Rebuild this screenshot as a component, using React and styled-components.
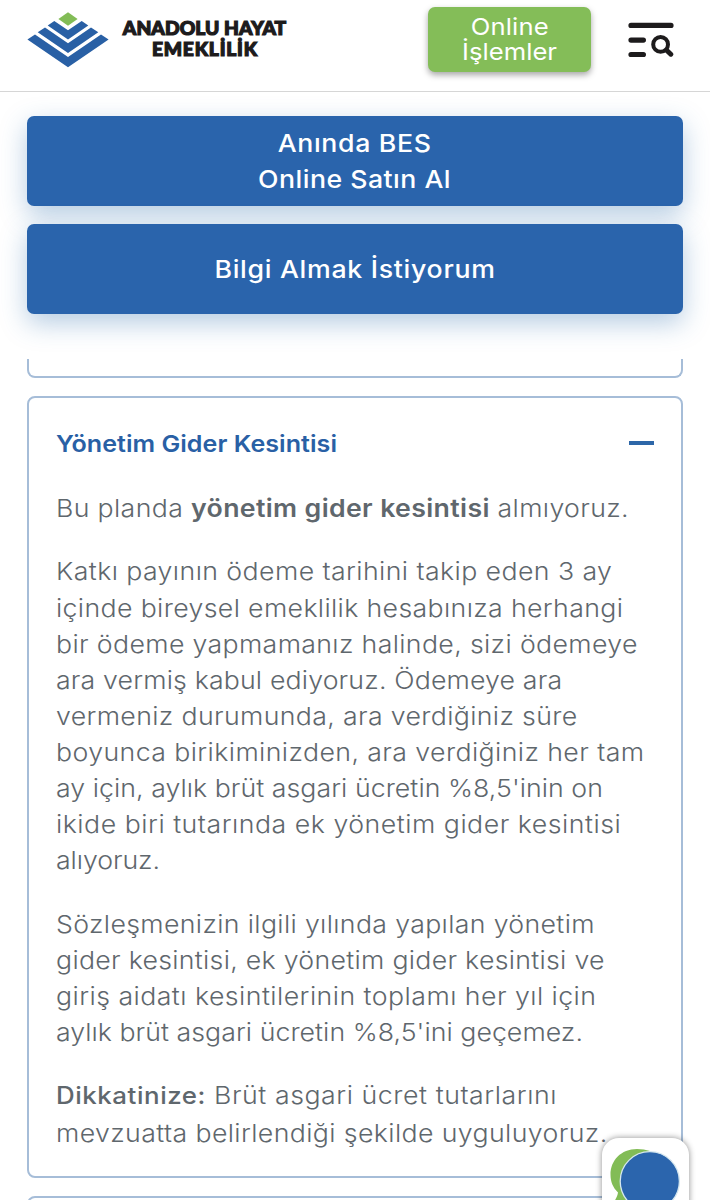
import React, { useLayoutEffect, useRef, useState } from "react";
import styled, { createGlobalStyle } from "styled-components";

const Notice = styled.b`
  font-size: 0.97em;
  font-weight: 500;
`;

const feeText = [
  {
    lines: [
      {
        width: 572,
        text: (
          <>
            Bu planda <strong>yönetim gider kesintisi</strong> almıyoruz.
          </>
        ),
      },
    ],
  },
  {
    lines: [
      { width: 555, text: "Katkı payının ödeme tarihini takip eden 3 ay" },
      { width: 566, text: "içinde bireysel emeklilik hesabınıza herhangi" },
      { width: 580, text: "bir ödeme yapmamanız halinde, sizi ödemeye" },
      { width: 505, text: "ara vermiş kabul ediyoruz. Ödemeye ara" },
      { width: 520, text: "vermeniz durumunda, ara verdiğiniz süre" },
      { width: 587, text: "boyunca birikiminizden, ara verdiğiniz her tam" },
      { width: 546, text: "ay için, aylık brüt asgari ücretin %8,5'inin on" },
      { width: 564, text: "ikide biri tutarında ek yönetim gider kesintisi" },
      { width: 103, text: "alıyoruz." },
    ],
  },
  {
    lines: [
      { width: 538, text: "Sözleşmenizin ilgili yılında yapılan yönetim" },
      { width: 547, text: "gider kesintisi, ek yönetim gider kesintisi ve" },
      { width: 539, text: "giriş aidatı kesintilerinin toplamı her yıl için" },
      { width: 526, text: "aylık brüt asgari ücretin %8,5'ini geçemez." },
    ],
  },
  {
    lines: [
      {
        width: 500,
        text: (
          <>
            <Notice>Dikkatinize:</Notice> Brüt asgari ücret tutarlarını
          </>
        ),
      },
      { width: 550, text: "mevzuatta belirlendiği şekilde uyguluyoruz." },
    ],
  },
];

// spreads the letters of one line over the given width
function FitLine({ width, stretch = 1.09, origin = "center", children }) {
  const ref = useRef(null);
  const [spacing, setSpacing] = useState(0);

  useLayoutEffect(() => {
    const el = ref.current;
    el.style.letterSpacing = "0px";
    const natural = el.offsetWidth;
    const next = (width / stretch - natural) / (el.textContent.length - 1);
    el.style.letterSpacing = `${next}px`;
    setSpacing(next);
  }, [width, stretch]);

  return (
    <Line>
      <Letters
        ref={ref}
        $stretch={stretch}
        $origin={origin}
        style={{ letterSpacing: `${spacing}px` }}
      >
        {children}
      </Letters>
    </Line>
  );
}

function Logo() {
  return (
    <Brand>
      <svg width="82" height="56" viewBox="27 11.8 82 56">
        <path fill="#82bc56" d="M68 12 77.6 18.8 68 25.6 58.4 18.8Z" />
        <g fill="#2960a5">
          <path d="M54.3 20.7 68 30 81.7 20.7 88.3 25.3 68 39.2 47.7 25.3Z" />
          <path d="M45 27.3 68 43 91 27.3 98.3 32.1 68 52.7 37.7 32.1Z" />
          <path d="M35 34.3 68 56.8 101 34.3 108.6 39.4 68 67 27.4 39.4Z" />
        </g>
      </svg>
      <BrandName>
        <FitLine width={163} stretch={1.04}>
          ANADOLU HAYAT
        </FitLine>
        <FitLine width={105} stretch={1.04}>
          EMEKLİLİK
        </FitLine>
      </BrandName>
    </Brand>
  );
}

function MenuSearchIcon() {
  return (
    <svg
      width="46"
      height="36"
      viewBox="628 22 46 36"
      fill="none"
      stroke="#1d1b1c"
      strokeLinecap="round"
    >
      <path strokeWidth="5.2" d="M631 25.4H671M631 40.1H643.4M631 54.5H643.4" />
      <circle cx="660.6" cy="44.4" r="7.4" strokeWidth="4" />
      <path strokeWidth="5" d="M666.6 50.2 670.8 54.2" />
    </svg>
  );
}

export default function App() {
  return (
    <>
      <GlobalStyle />
      <Page>
        <Header>
          <Logo />
          <HeaderActions>
            <OnlineButton>
              <FitLine width={78}>Online</FitLine>
              <FitLine width={95}>İşlemler</FitLine>
            </OnlineButton>
            <MenuButton aria-label="Menü">
              <MenuSearchIcon />
            </MenuButton>
          </HeaderActions>
        </Header>
        <Buttons>
          <MainButton>
            <FitLine width={153}>Anında BES</FitLine>
            <FitLine width={193}>Online Satın Al</FitLine>
          </MainButton>
          <MainButton>
            <FitLine width={281}>Bilgi Almak İstiyorum</FitLine>
          </MainButton>
        </Buttons>
        <Accordion>
          <PreviousPanel />
          <Panel>
            <PanelHeader>
              <FitLine width={281} origin="left">
                Yönetim Gider Kesintisi
              </FitLine>
              <Minus />
            </PanelHeader>
            {feeText.map((paragraph, i) => (
              <Paragraph key={i}>
                {paragraph.lines.map((line, j) => (
                  <FitLine key={j} width={line.width + 1} origin="left">
                    {line.text}
                  </FitLine>
                ))}
              </Paragraph>
            ))}
          </Panel>
          <NextPanel />
        </Accordion>
        <ChatButton aria-label="Sohbet">
          <svg width="87" height="62" viewBox="602 1138 87 62">
            <path
              fill="#82bc56"
              d="M637 1149C621 1149 610.5 1160.5 610.5 1174.5C610.5 1182 613 1187.5 618 1192.5C617.5 1195.5 616.5 1198 614.5 1201H650V1151Q644 1149 637 1149Z"
            />
            <circle
              cx="649.8"
              cy="1181.3"
              r="29.6"
              fill="#2b65ad"
              stroke="#d5e7ef"
              strokeWidth="1.3"
            />
          </svg>
        </ChatButton>
      </Page>
    </>
  );
}

const GlobalStyle = createGlobalStyle`
  * {
    box-sizing: border-box;
  }
  body {
    margin: 0;
    background: #fff;
    font-family: Inter, "Liberation Sans", sans-serif;
  }
  button {
    border: none;
    padding: 0;
    font-family: inherit;
  }
  svg {
    display: block;
  }
`;

const Page = styled.div`
  position: relative;
  display: flex;
  flex-direction: column;
  width: 710px;
  height: 1200px;
  overflow: hidden;
`;

const Line = styled.span`
  display: block;
  white-space: nowrap;
`;

const Letters = styled.span`
  display: inline-block;
  vertical-align: top;
  transform: scaleX(${(props) => props.$stretch});
  transform-origin: ${(props) => props.$origin};
`;

const Header = styled.header`
  flex: none;
  display: flex;
  justify-content: space-between;
  height: 92px;
  padding: 7px 36px 0 27px;
  border-bottom: 1px solid #d6d6d6;
`;

const Brand = styled.div`
  display: flex;
  gap: 17px;
  padding-top: 4.5px;
`;

const BrandName = styled.div`
  padding-top: 6px;
  font-family: Lato, sans-serif;
  font-size: 18.5px;
  font-weight: 900;
  line-height: 21.5px;
  text-align: center;
  color: #1d1b1c;
  -webkit-text-stroke: 1.2px #1d1b1c;
`;

const HeaderActions = styled.div`
  display: flex;
  gap: 37px;
`;

const OnlineButton = styled.button`
  width: 163px;
  height: 65px;
  padding-bottom: 2px;
  border-radius: 7px;
  background: #84bd58;
  color: #fff;
  font-size: 23.5px;
  line-height: 25px;
  box-shadow: 0 3px 6px rgba(0, 0, 0, 0.35);
`;

const MenuButton = styled.button`
  align-self: flex-start;
  padding-top: 15px;
  background: none;
`;

const Buttons = styled.div`
  flex: none;
  display: grid;
  gap: 18px;
  padding: 24px 27px 0;
`;

const MainButton = styled.button`
  height: 90px;
  padding-bottom: 1px;
  border-radius: 7px;
  background: #2a64ac;
  color: #fff;
  font-size: 24.5px;
  font-weight: 500;
  line-height: 36px;
  box-shadow: 0 9px 27px rgba(42, 110, 172, 0.35);
`;

const Accordion = styled.main`
  flex: none;
  padding: 45px 27px 0;
`;

const PreviousPanel = styled.div`
  height: 19px;
  border: 2px solid #a6bdd8;
  border-top: none;
  border-radius: 0 0 8px 8px;
`;

const Panel = styled.section`
  height: 782px;
  margin: 18px 0;
  padding: 28px 27px 0;
  border: 2px solid #a6bdd8;
  border-radius: 8px;
`;

const PanelHeader = styled.div`
  display: flex;
  align-items: center;
  justify-content: space-between;
  height: 36px;
  color: #2960a5;
  font-size: 23px;
  font-weight: 600;
`;

const Minus = styled.i`
  width: 25px;
  height: 4px;
  margin-top: -3px;
  background: #2d67a8;
`;

const Paragraph = styled.p`
  margin: 27.4px 0 0;
  color: #5f676d;
  font-size: 24.5px;
  font-weight: 300;
  line-height: 36.1px;
  ${PanelHeader} + & {
    margin-top: 28px;
  }
  strong {
    font-weight: 600;
  }
`;

const NextPanel = styled.div`
  height: 60px;
  border: 2px solid #a6bdd8;
  border-radius: 8px;
`;

const ChatButton = styled.button`
  position: absolute;
  left: 602px;
  top: 1138px;
  width: 87px;
  height: 87px;
  display: flex;
  align-items: flex-start;
  border-radius: 17px;
  background: #fff;
  box-shadow: 0 0 6px rgba(0, 0, 0, 0.45);
`;
